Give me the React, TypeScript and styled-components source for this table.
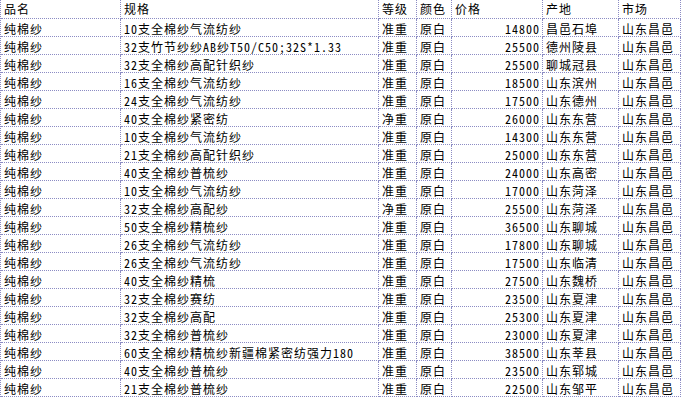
import React from 'react';
import styled, { createGlobalStyle } from 'styled-components';

const GlobalStyle = createGlobalStyle`
  html, body {
    margin: 0;
    padding: 0;
    background: #ffffff;
  }
`;

interface Row {
  name: string;
  spec: string;
  grade: string;
  color: string;
  price: number;
  origin: string;
  market: string;
}

const specs: [string, string, number, string][] = [
  ['10支全棉纱气流纺纱', '准重', 14800, '昌邑石埠'],
  ['32支竹节纱纱AB纱T50/C50;32S*1.33', '准重', 25500, '德州陵县'],
  ['32支全棉纱高配针织纱', '准重', 25500, '聊城冠县'],
  ['16支全棉纱气流纺纱', '准重', 18500, '山东滨州'],
  ['24支全棉纱气流纺纱', '准重', 17500, '山东德州'],
  ['40支全棉纱紧密纺', '净重', 26000, '山东东营'],
  ['10支全棉纱气流纺纱', '准重', 14300, '山东东营'],
  ['21支全棉纱高配针织纱', '准重', 25000, '山东东营'],
  ['40支全棉纱普梳纱', '准重', 24000, '山东高密'],
  ['10支全棉纱气流纺纱', '准重', 17000, '山东菏泽'],
  ['32支全棉纱高配纱', '净重', 25500, '山东菏泽'],
  ['50支全棉纱精梳纱', '准重', 36500, '山东聊城'],
  ['26支全棉纱气流纺纱', '准重', 17800, '山东聊城'],
  ['26支全棉纱气流纺纱', '准重', 17500, '山东临清'],
  ['40支全棉纱精梳', '准重', 27500, '山东魏桥'],
  ['32支全棉纱赛纺', '准重', 23500, '山东夏津'],
  ['32支全棉纱高配', '准重', 25300, '山东夏津'],
  ['32支全棉纱普梳纱', '准重', 23000, '山东夏津'],
  ['60支全棉纱精梳纱新疆棉紧密纺强力180', '准重', 38500, '山东莘县'],
  ['40支全棉纱普梳纱', '准重', 23500, '山东郓城'],
  ['21支全棉纱普梳纱', '准重', 22500, '山东邹平'],
];

const rows: Row[] = specs.map(([spec, grade, price, origin]) => ({
  name: '纯棉纱',
  spec,
  grade,
  color: '原白',
  price,
  origin,
  market: '山东昌邑',
}));

const Sheet = styled.div`
  display: grid;
  grid-template-columns: 120px 258px 38px 35px 91px 76px 62px;
  grid-auto-rows: 18px;
  width: 681px;
  border-left: 1px dotted #8c8cc4;
  box-sizing: border-box;
  font-family: 'Noto Sans Mono CJK SC', 'Noto Sans CJK SC', sans-serif;
  font-size: 12px;
  letter-spacing: 1px;
  color: #000000;
  background: #ffffff;
`;

const Cell = styled.div<{ $head?: boolean; $right?: boolean }>`
  box-sizing: border-box;
  height: ${({ $head }) => ($head ? '19px' : '18px')};
  line-height: ${({ $head }) => ($head ? '18px' : '19px')};
  padding: 0 2px 0 3px;
  border-right: 1px dotted #8c8cc4;
  border-bottom: 1px dotted #8c8cc4;
  white-space: nowrap;
  overflow: hidden;
  text-align: ${({ $right }) => ($right ? 'right' : 'left')};
`;

const HeadRow = styled.div`
  display: contents;
  & > div {
    grid-row: 1;
  }
`;

const headers = ['品名', '规格', '等级', '颜色', '价格', '产地', '市场'];

export default function App() {
  return (
    <>
      <GlobalStyle />
      <Sheet style={{ gridTemplateRows: `19px repeat(${rows.length}, 18px)` }}>
        <HeadRow>
          {headers.map((h) => (
            <Cell key={h} $head>
              {h}
            </Cell>
          ))}
        </HeadRow>
        {rows.map((r, i) => (
          <React.Fragment key={i}>
            <Cell>{r.name}</Cell>
            <Cell>{r.spec}</Cell>
            <Cell>{r.grade}</Cell>
            <Cell>{r.color}</Cell>
            <Cell $right>{r.price}</Cell>
            <Cell>{r.origin}</Cell>
            <Cell>{r.market}</Cell>
          </React.Fragment>
        ))}
      </Sheet>
    </>
  );
}
